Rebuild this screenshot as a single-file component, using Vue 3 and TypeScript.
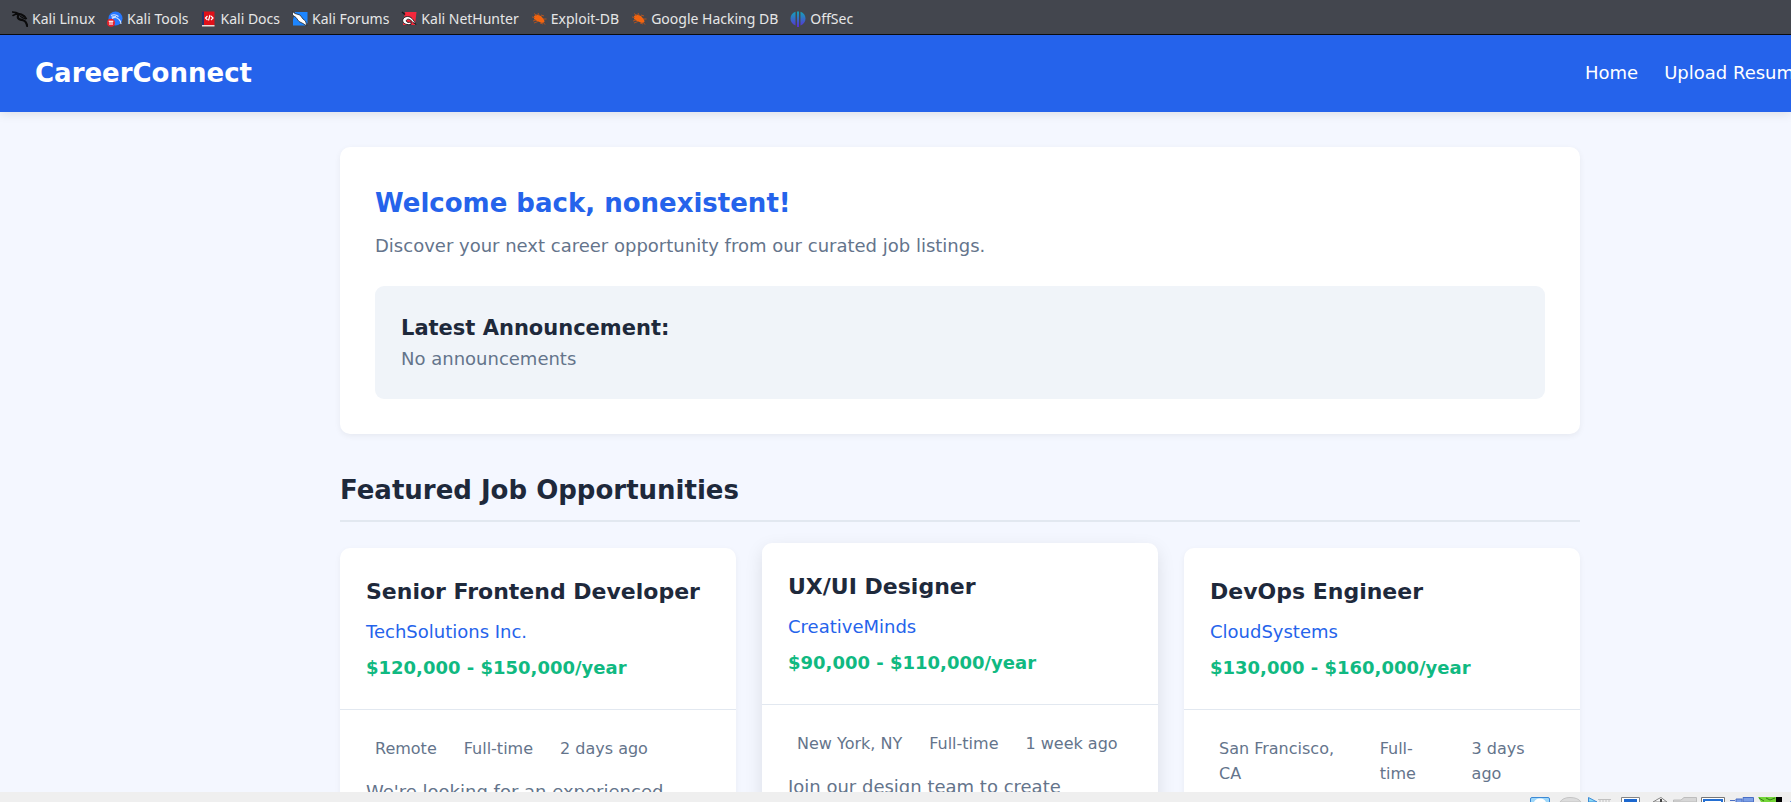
<script setup lang="ts">
interface Bookmark {
  icon: string
  label: string
}

interface Job {
  title: string
  company: string
  salary: string
  meta: string[]
  summary: string
  raised?: boolean
}

const bookmarks: Bookmark[] = [
  { icon: 'dragon', label: 'Kali Linux' },
  { icon: 'tools', label: 'Kali Tools' },
  { icon: 'docs', label: 'Kali Docs' },
  { icon: 'forums', label: 'Kali Forums' },
  { icon: 'nethunter', label: 'Kali NetHunter' },
  { icon: 'bug', label: 'Exploit-DB' },
  { icon: 'bug', label: 'Google Hacking DB' },
  { icon: 'offsec', label: 'OffSec' },
]

const jobs: Job[] = [
  {
    title: 'Senior Frontend Developer',
    company: 'TechSolutions Inc.',
    salary: '$120,000 - $150,000/year',
    meta: ['Remote', 'Full-time', '2 days ago'],
    summary: "We're looking for an experienced",
  },
  {
    title: 'UX/UI Designer',
    company: 'CreativeMinds',
    salary: '$90,000 - $110,000/year',
    meta: ['New York, NY', 'Full-time', '1 week ago'],
    summary: 'Join our design team to create',
    raised: true,
  },
  {
    title: 'DevOps Engineer',
    company: 'CloudSystems',
    salary: '$130,000 - $160,000/year',
    meta: ['San Francisco, CA', 'Full-time', '3 days ago'],
    summary: '',
  },
]
</script>

<template>
  <div class="screen">
    <nav class="bookmarks" aria-label="Bookmarks">
      <a v-for="b in bookmarks" :key="b.label" class="bookmark" href="#">
        <svg class="bookmark-icon" viewBox="0 0 16 16" aria-hidden="true">
          <g v-if="b.icon === 'dragon'" fill="none" stroke="#0b0b0c" stroke-linecap="round">
            <path d="M0.5 1 4 1.600 8 3.5M1 4.500 4 3 7 4" stroke-width="1.6" />
            <path d="M4.5 3C8 2.6 10 3.2 12.5 5.5M6 5C5 8 8 8.6 11 9.2 14 10 14.6 12 15.2 15" stroke-width="2.2" />
            <path d="M8.5 5.5 11 6.8 13.5 8M11.5 4.5 14.5 7.5" stroke-width="1.3" />
          </g>
          <g v-else-if="b.icon === 'tools'">
            <circle cx="8.5" cy="7.5" r="7" fill="#2777ff" />
            <path d="M4 4.5Q8 2.5 11.5 5.5M5 7.5Q9 5 12 8.5 14 10 14 13M4.5 6 9 5.5" fill="none" stroke="#d5e5ff" stroke-width="1.1" />
            <circle cx="4" cy="11.7" r="4" fill="#e6212b" />
            <path d="M1.7 10.3H6.3M3 10.3V14M5 10.3V14" fill="none" stroke="#fff" stroke-width="1.1" />
          </g>
          <g v-else-if="b.icon === 'docs'">
            <path d="M1 0.500H13.500V15H1Z" fill="#e01019" />
            <path d="M1 0.500H3V14H1Z" fill="#27336b" />
            <path d="M1 14H13.500V15.500H1Z" fill="#e8dcd9" />
            <path d="M6.500 5 4.500 7 6.500 9M10 5 12 7 10 9M9 4 7.500 9.500" fill="none" stroke="#fff" stroke-width="1.200" />
          </g>
          <g v-else-if="b.icon === 'forums'">
            <path d="M3 1H15.500V12L13 14.500H1V9Z" fill="#1d86ff" />
            <path d="M0.500 0.500 3 2.500 8 4 11 8 13.500 10 15 15 11 12.500 7 10.500 4 6.500 0.500 4Z" fill="#fff" stroke="#25282e" stroke-width="0.800" />
          </g>
          <g v-else-if="b.icon === 'nethunter'">
            <path d="M4 1H15.500L14 14H2Z" fill="#f5283c" />
            <path d="M1 1 4 3.500" stroke="#16171a" stroke-width="1.500" />
            <path d="M10 13.500C4 14.500 0.500 11 2 8 4 4.500 9 5 11 7.500 13 9.500 13.500 11 15 13.500L12 11.500C9 8 7 7.500 5.500 9 4.500 11 7 12 10 11Z" fill="#fff" stroke="#17181b" stroke-width="0.900" />
          </g>
          <g v-else-if="b.icon === 'bug'">
            <path d="M3 5 6 3.500 10 5 13 8.500 13.500 11 11 12 6 10 3 8Z" fill="#f2640f" />
            <path d="M1 6 4 6.500M3 2.500 6 4.500M7 2 8.500 5M10 4 13 5M12 8H15.500M2 10 5 9M3 12 7 10.500M9 12 12 13M12 11 14 13.500" fill="none" stroke="#b8541d" stroke-width="0.900" />
          </g>
          <g v-else>
            <defs>
              <linearGradient id="offsec-fill" x1="0" y1="0" x2="0" y2="1">
                <stop offset="0" stop-color="#12a5b8" />
                <stop offset="1" stop-color="#5b2dd6" />
              </linearGradient>
            </defs>
            <path d="M5.500 0.800V14.500C2 13 0.500 10.500 0.500 7.500 0.500 4.500 2.500 1.800 5.500 0.800ZM7 0.500H9V16H7ZM10.500 0.800C13.500 1.800 15.500 4.500 15.500 7.500 15.500 10.500 14 13 10.500 14.500Z" fill="url(#offsec-fill)" />
          </g>
        </svg>
        <span>{{ b.label }}</span>
      </a>
    </nav>

    <div class="page">
      <header class="topbar">
        <div class="logo">CareerConnect</div>
        <nav class="menu" aria-label="Main">
          <a href="#">Home</a>
          <a href="#">Upload Resume</a>
        </nav>
      </header>

      <main class="content">
        <section class="welcome">
          <h1>Welcome back, nonexistent!</h1>
          <p>Discover your next career opportunity from our curated job listings.</p>
          <div class="announcement">
            <h3>Latest Announcement:</h3>
            <p>No announcements</p>
          </div>
        </section>

        <h2 class="section-title">Featured Job Opportunities</h2>

        <div class="jobs">
          <article v-for="job in jobs" :key="job.title" class="job" :class="{ raised: job.raised }">
            <div class="job-head">
              <h3>{{ job.title }}</h3>
              <p class="company">{{ job.company }}</p>
              <p class="salary">{{ job.salary }}</p>
            </div>
            <div class="job-body">
              <div class="meta">
                <span v-for="m in job.meta" :key="m" class="meta-item"><i></i><span>{{ m }}</span></span>
              </div>
              <p class="summary">{{ job.summary }}</p>
            </div>
          </article>
        </div>
      </main>
    </div>

    <footer class="statusbar">
      <svg class="status-icons" viewBox="0 0 261 5" aria-hidden="true">
        <path d="M0.500 5V2Q0.500 0.500 2 0.500H18Q19.500 0.500 19.500 2V5" fill="#9fd8fa" stroke="#3c8ad6" />
        <path d="M4 5Q6 1 10 1.500 14 1 16 5Z" fill="#fff" />
        <path d="M30 5Q33 0.500 40 0.500 48 0.500 51 5Z" fill="#dcdcdc" stroke="#c4c4c4" />
        <path d="M58.500 5V0.500L67 5Z" fill="#8bdcf8" stroke="#3c8ad6" />
        <path d="M68 2.500H81M70 2V5M73 2V5M76 2V5M79 2V5" stroke="#c0c0c0" fill="none" />
        <path d="M91.500 5V0.500H109.500V5" fill="#fff" stroke="#858585" />
        <path d="M94 2H107V5H94Z" fill="#1c68cf" />
        <path d="M123 5 128 2 131 0.500 137 5Z" fill="#f7f7f7" stroke="#858585" />
        <path d="M131 2V5" stroke="#444" stroke-width="2" />
        <path d="M143.500 5V3H151L154 0.500H166.500V5Z" fill="#d6d6d6" stroke="#bdbdbd" />
        <path d="M171.500 5V0.500H194.500V5" fill="#fff" stroke="#777" />
        <path d="M174 5V3H192V5" fill="none" stroke="#246fd2" stroke-width="2" />
        <path d="M200 3.500H205M206 5V2H212V5M213 5V0.500H223.500V5Z" fill="#7c9fe6" stroke="#4a6fc4" />
        <path d="M228 0H246V5H231Z" fill="#74d637" />
        <path d="M229 1 234 4M236 1 240 3 245 1" stroke="#347c18" fill="none" />
        <path d="M246 0H252V5H246Z" fill="#000" />
        <path d="M260 4H261V5H260Z" fill="#7c9fe6" />
      </svg>
    </footer>
  </div>
</template>

<style>
body {
  margin: 0;
}
</style>

<style scoped>
.screen {
  height: 100vh;
  display: flex;
  flex-direction: column;
  overflow: hidden;
  background: #f4f7ff;
  color: #1e293b;
  font-family: "DejaVu Sans", Verdana, sans-serif;
  font-size: 18px;
  line-height: 28px;
}

h1,
h2,
h3,
p {
  margin: 0;
}

a {
  color: inherit;
  text-decoration: none;
}

.bookmarks {
  flex: none;
  display: flex;
  gap: 12px;
  padding: 4px 12px 0;
  height: 30px;
  align-items: center;
  background: #43464e;
  border-bottom: 1px solid #0c0c0d;
  color: #e6e6e7;
  font-family: "Noto Sans", sans-serif;
  font-size: 14px;
  line-height: 20px;
}

.bookmark {
  display: flex;
  align-items: center;
  gap: 4px;
  white-space: nowrap;
}

.bookmark-icon {
  width: 16px;
  height: 16px;
}

.page {
  flex: 1;
  min-height: 0;
  overflow: hidden;
}

.topbar {
  display: flex;
  justify-content: space-between;
  align-items: center;
  padding: 17px 0 18px 35px;
  background: #2563eb;
  color: #fff;
  box-shadow: 0 2px 10px rgba(0, 0, 0, 0.1);
}

.logo {
  font-size: 26px;
  font-weight: 700;
  line-height: 42px;
}

.menu {
  display: flex;
  gap: 26px;
  flex: 0 0 206px;
  min-width: 0;
  white-space: nowrap;
}

.content {
  display: grid;
  grid-template-columns: 340fr minmax(0, 1240px) 211fr;
  padding: 35px 0;
}

.content > * {
  grid-column: 2;
}

.welcome {
  padding: 35px;
  background: #fff;
  border-radius: 10px;
  box-shadow: 0 2px 6px rgba(0, 0, 0, 0.06);
  color: #64748b;
}

.welcome h1 {
  margin-bottom: 8px;
  color: #2563eb;
  font-size: 26px;
  line-height: 42px;
}

.announcement {
  margin-top: 26px;
  padding: 26px;
  background: #f0f4f9;
  border-radius: 9px;
}

.announcement h3 {
  color: #1e293b;
  font-size: 21px;
  line-height: 33px;
}

.section-title {
  margin: 35px 0 26px;
  padding-bottom: 9px;
  border-bottom: 2px solid #e2e8f0;
  font-size: 26px;
  line-height: 42px;
}

.jobs {
  display: grid;
  grid-template-columns: repeat(3, minmax(0, 1fr));
  gap: 26px;
}

.job {
  background: #fff;
  border-radius: 10px;
  box-shadow: 0 2px 6px rgba(0, 0, 0, 0.05);
}

.job.raised {
  transform: translateY(-5px);
  box-shadow: 0 6px 18px rgba(0, 0, 0, 0.1);
}

.job-head {
  display: grid;
  gap: 8px;
  padding: 26px 26px 27px;
  border-bottom: 1px solid #e2e8f0;
}

.job-head h3 {
  font-size: 22px;
  line-height: 36px;
}

.company {
  color: #2563eb;
}

.salary {
  color: #10b981;
  font-weight: 700;
}

.job-body {
  padding: 26px;
  color: #64748b;
}

.meta {
  display: flex;
  gap: 18px;
  margin-bottom: 17px;
  font-size: 16px;
  line-height: 25px;
}

.meta-item {
  display: flex;
  gap: 9px;
}

.statusbar {
  flex: none;
  display: flex;
  justify-content: flex-end;
  align-items: flex-end;
  height: 10px;
  background: #efefef;
}

.status-icons {
  width: 261px;
  height: 5px;
}
</style>
